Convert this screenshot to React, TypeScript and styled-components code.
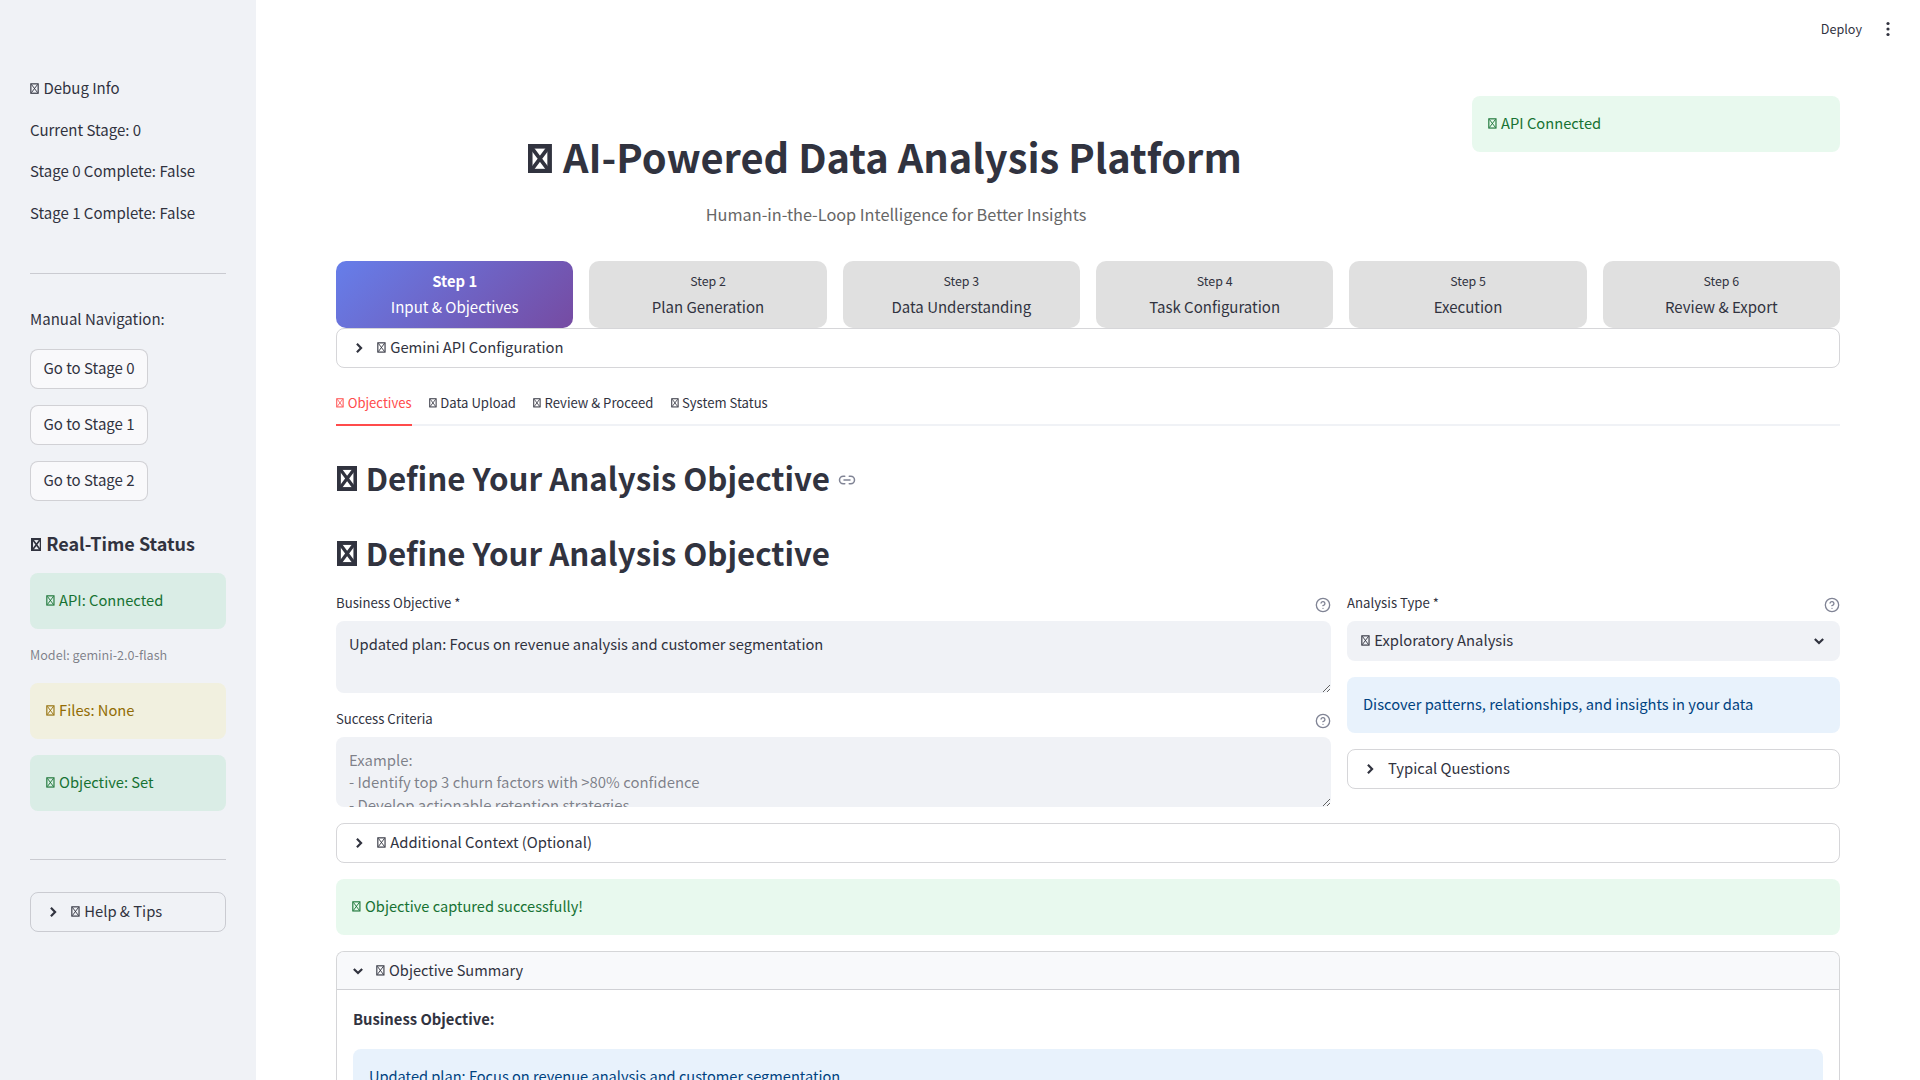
import React from "react";
import styled, { createGlobalStyle } from "styled-components";
import { CircleHelp, Link2 } from "lucide-react";

const Global = createGlobalStyle`
  html, body { margin: 0; padding: 0; background: #fff; }
  body { font-family: "Noto Sans CJK JP", "Noto Sans CJK SC", sans-serif; color: #31333f; font-size: 14.8px; }
  * { box-sizing: border-box; }
`;

const Page = styled.div`display: flex; width: 1920px; height: 1080px; overflow: hidden;`;
const Sidebar = styled.aside`width: 256px; flex: none; background: #f0f2f6; padding: 75px 30px 0; display: flex; flex-direction: column;`;
const SideText = styled.p`margin: 0 0 16px; font-size: 15px; line-height: 25.6px;`;
const Rule = styled.hr<{ $top: number; $bottom: number }>`
  width: 100%; margin: ${p => p.$top}px 0 ${p => p.$bottom}px; border: 0; border-top: 1px solid rgba(49, 51, 63, 0.2);
`;
const NavList = styled.div`display: flex; flex-direction: column; gap: 16px; align-items: flex-start; margin-top: 1px;`;
const NavButton = styled.button`
  height: 40px; width: 118px; padding: 0 0 2px; font: inherit; font-size: 15px; line-height: 22px; color: #31333f; background: #f9f9fb;
  border: 1px solid rgba(49, 51, 63, 0.2); border-radius: 8px;
`;
const SideHeading = styled.h3`margin: 26px 0 14px; font-size: 18px; line-height: 32px; font-weight: 600;`;
const Alert = styled.div<{ $kind: "success" | "warning" | "info" }>`
  height: 56px; padding: 0 16px 3px; display: flex; align-items: center; border-radius: 8px; font-size: 14.7px; white-space: pre-wrap;
  background: ${p => p.$kind === "success" ? "rgba(33,195,84,0.1)" : p.$kind === "warning" ? "rgba(255,227,18,0.1)" : "rgba(28,131,225,0.1)"};
  color: ${p => p.$kind === "success" ? "#177233" : p.$kind === "warning" ? "#926c05" : "#004280"};
`;
const Caption = styled.div`margin: 15px 0 17px; font-size: 12.6px; line-height: 22px; color: rgba(49, 51, 63, 0.6);`;
const StackedAlert = styled(Alert)`margin-bottom: 16px;`;

const Main = styled.main`flex: 1; min-width: 0; display: flex; flex-direction: column;`;
const TopBar = styled.header`height: 60px; flex: none; display: flex; align-items: center; justify-content: flex-end; gap: 24px; padding: 0 30px 2px 0; font-size: 12.6px;`;
const DeployLabel = styled.span`margin-top: -2px;`;
const Content = styled.div`padding: 0 80px;`;
const Hero = styled.section`display: grid; grid-template-columns: 1fr 368px; gap: 16px; height: 165px; margin-top: 36px;`;
const HeroText = styled.div`padding-top: 33px; text-align: center;`;
const Title = styled.h1`margin: 0 0 18px; padding-right: 23px; font-size: 39.8px; line-height: 53px; font-weight: 700;`;
const Subtitle = styled.p`margin: 0; font-size: 16.3px; line-height: 29px; color: #666;`;
const Steps = styled.div`display: grid; grid-template-columns: repeat(6, 1fr); gap: 16px;`;
const Step = styled.div<{ $active?: boolean }>`
  height: 67px; border-radius: 10px; padding-top: 7px; text-align: center;
  background: ${p => p.$active ? "linear-gradient(135deg, #667eea 0%, #764ba2 100%)" : "#e0e0e0"};
  color: ${p => p.$active ? "#fff" : "#31333f"};
`;
const StepLabel = styled.div<{ $active?: boolean }>`
  font-size: ${p => p.$active ? 14.8 : 12.4}px; font-weight: ${p => p.$active ? 700 : 400}; line-height: 26px;
`;
const StepName = styled.div`font-size: 15px; line-height: 26px;`;
const Expander = styled.div`
  height: 40px; display: flex; align-items: center; gap: 8px; padding: 0 12px; font-size: 14.8px;
  border: 1px solid rgba(49, 51, 63, 0.2); border-radius: 8px;
`;
const ExpanderLabel = styled.span`margin-top: -3px;`;
const Tabs = styled.nav`display: flex; gap: 17px; height: 58px; padding-top: 18px; border-bottom: 2px solid #f0f2f6;`;
const Tab = styled.div<{ $active?: boolean }>`
  height: 40px; line-height: 34px; font-size: 13.1px; color: ${p => p.$active ? "#ff4b4b" : "#31333f"};
  border-bottom: 2px solid ${p => p.$active ? "#ff4b4b" : "transparent"};
`;
const TofuBox = styled.svg<{ $bold?: boolean }>`
  display: inline-block; width: 0.6em; height: 0.74em; margin: 0 0.04em 0 0.03em; vertical-align: 0; flex: none;
  rect { stroke-width: ${p => p.$bold ? 4.6 : 3}; }
  path { stroke-width: ${p => p.$bold ? 3.8 : 2.4}; }
`;
const Heading = styled.h2`
  display: flex; align-items: center; margin: 32px 0 0; font-size: 31.3px; line-height: 43px; font-weight: 600; white-space: pre-wrap;
  ${TofuBox} { font-size: 1.08em; }
`;
const FirstHeading = styled(Heading)`margin-top: 30px;`;
const LinkMark = styled(Link2)`color: #808495; margin: 5px 0 0 8px;`;
const Form = styled.section`display: grid; grid-template-columns: 995px 493px; gap: 16px; margin-top: 20px;`;
const Column = styled.div`display: flex; flex-direction: column;`;
const LabelRow = styled.div`height: 27px; display: flex; justify-content: space-between; font-size: 13.2px; line-height: 18px;`;
const HelpMark = styled(CircleHelp)`color: #808495; margin: 3px 0 0;`;
const Area = styled.textarea<{ $h: number; $gap?: number }>`
  display: block; width: 100%; height: ${p => p.$h}px; margin-bottom: ${p => p.$gap ?? 0}px; padding: 12px 13px 0; font: inherit; font-size: 14.7px; line-height: 22.4px;
  color: #31333f; background: #f0f2f6; border: 0; border-radius: 8px; outline: 0; resize: vertical; overflow: hidden;
  &::placeholder { color: rgba(49, 51, 63, 0.6); opacity: 1; font-size: 14.9px; }
`;
const Select = styled.div`height: 40px; padding: 0 11px 0 14px; display: flex; align-items: center; justify-content: space-between; border-radius: 8px; background: #f0f2f6;`;
const InfoStack = styled.div`margin: 16px 0;`;
const WideExpander = styled(Expander)`margin-top: 16px;`;
const Banner = styled(Alert)`margin: 16px 0; font-size: 14.6px;`;
const Summary = styled.div`border: 1px solid rgba(49, 51, 63, 0.2); border-bottom: 0; border-radius: 8px 8px 0 0; overflow: hidden;`;
const SummaryHead = styled.div`height: 38px; display: flex; align-items: center; gap: 8px; padding: 0 11px; font-size: 14.6px; background: #f8f9fb; border-bottom: 1px solid rgba(49, 51, 63, 0.2);`;
const SummaryBody = styled.div`padding: 16px 16px 0;`;
const Strong = styled.div`font-weight: 700; line-height: 26px; margin-bottom: 17px;`;
const SummaryValue = styled(Alert)`font-size: 14.6px;`;

const Tofu = ({ bold }: { bold?: boolean }) => (
  <TofuBox $bold={bold} viewBox="0 0 24 29" aria-hidden="true" preserveAspectRatio="none">
    <rect x="2.25" y="2.25" width="19.5" height="24.5" fill="none" stroke="currentColor" />
    <path d="M4 4l16 21M20 4L4 25" fill="none" stroke="currentColor" />
  </TofuBox>
);

const Chevron = ({ open }: { open?: boolean }) => (
  <svg width="20" height="20" viewBox="0 0 24 24" fill="none" stroke="#31333f" strokeWidth="2.6" style={{ flex: "none" }}>
    <path d={open ? "M7 9.5l5 5 5-5" : "M9.5 7l5 5-5 5"} />
  </svg>
);

const steps = [
  ["Step 1", "Input & Objectives"], ["Step 2", "Plan Generation"], ["Step 3", "Data Understanding"],
  ["Step 4", "Task Configuration"], ["Step 5", "Execution"], ["Step 6", "Review & Export"],
];
const tabs = ["Objectives", "Data Upload", "Review & Proceed", "System Status"];

export default function App() {
  return (
    <Page>
      <Global />
      <Sidebar>
        <SideText><Tofu /> Debug Info</SideText>
        <SideText>Current Stage: 0</SideText>
        <SideText>Stage 0 Complete: False</SideText>
        <SideText>Stage 1 Complete: False</SideText>
        <Rule $top={32} $bottom={32} />
        <SideText>Manual Navigation:</SideText>
        <NavList>
          <NavButton>Go to Stage 0</NavButton>
          <NavButton>Go to Stage 1</NavButton>
          <NavButton>Go to Stage 2</NavButton>
        </NavList>
        <SideHeading><Tofu bold /> Real-Time Status</SideHeading>
        <Alert $kind="success"><span><Tofu /> API: Connected</span></Alert>
        <Caption>Model: gemini-2.0-flash</Caption>
        <StackedAlert $kind="warning"><span><Tofu /> Files: None</span></StackedAlert>
        <Alert $kind="success"><span><Tofu /> Objective: Set</span></Alert>
        <Rule $top={48} $bottom={32} />
        <Expander><Chevron /><ExpanderLabel><Tofu /> Help &amp; Tips</ExpanderLabel></Expander>
      </Sidebar>
      <Main>
        <TopBar>
          <DeployLabel>Deploy</DeployLabel>
          <svg width="4" height="16" viewBox="0 0 4 16" fill="#31333f"><circle cx="2" cy="2.5" r="1.6" /><circle cx="2" cy="8" r="1.6" /><circle cx="2" cy="13.5" r="1.6" /></svg>
        </TopBar>
        <Content>
          <Hero>
            <HeroText>
              <Title><Tofu bold /> AI-Powered Data Analysis Platform</Title>
              <Subtitle>Human-in-the-Loop Intelligence for Better Insights</Subtitle>
            </HeroText>
            <Alert $kind="success"><span><Tofu /> API Connected</span></Alert>
          </Hero>
          <Steps>
            {steps.map(([label, name], i) => (
              <Step key={label} $active={i === 0}>
                <StepLabel $active={i === 0}>{label}</StepLabel>
                <StepName>{name}</StepName>
              </Step>
            ))}
          </Steps>
          <Expander><Chevron /><ExpanderLabel><Tofu /> Gemini API Configuration</ExpanderLabel></Expander>
          <Tabs>
            {tabs.map((t, i) => <Tab key={t} $active={i === 0}><Tofu /> {t}</Tab>)}
          </Tabs>
          <FirstHeading><span><Tofu bold /> Define Your Analysis Objective</span><LinkMark size={18} /></FirstHeading>
          <Heading><span><Tofu bold /> Define Your Analysis Objective</span></Heading>
          <Form>
            <Column>
              <LabelRow><span>Business Objective *</span><HelpMark size={16} /></LabelRow>
              <Area $h={72} $gap={17} readOnly value="Updated plan: Focus on revenue analysis and customer segmentation" />
              <LabelRow><span>Success Criteria</span><HelpMark size={16} /></LabelRow>
              <Area $h={70} readOnly placeholder={"Example:\n- Identify top 3 churn factors with >80% confidence\n- Develop actionable retention strategies"} />
            </Column>
            <Column>
              <LabelRow><span>Analysis Type *</span><HelpMark size={16} /></LabelRow>
              <Select><ExpanderLabel><Tofu /> Exploratory Analysis</ExpanderLabel><Chevron open /></Select>
              <InfoStack><Alert $kind="info">Discover patterns, relationships, and insights in your data</Alert></InfoStack>
              <Expander><Chevron /><ExpanderLabel>Typical Questions</ExpanderLabel></Expander>
            </Column>
          </Form>
          <WideExpander><Chevron /><ExpanderLabel><Tofu /> Additional Context (Optional)</ExpanderLabel></WideExpander>
          <Banner $kind="success"><span><Tofu /> Objective captured successfully!</span></Banner>
          <Summary>
            <SummaryHead><Chevron open /><ExpanderLabel><Tofu /> Objective Summary</ExpanderLabel></SummaryHead>
            <SummaryBody>
              <Strong>Business Objective:</Strong>
              <SummaryValue $kind="info">Updated plan: Focus on revenue analysis and customer segmentation</SummaryValue>
            </SummaryBody>
          </Summary>
        </Content>
      </Main>
    </Page>
  );
}
